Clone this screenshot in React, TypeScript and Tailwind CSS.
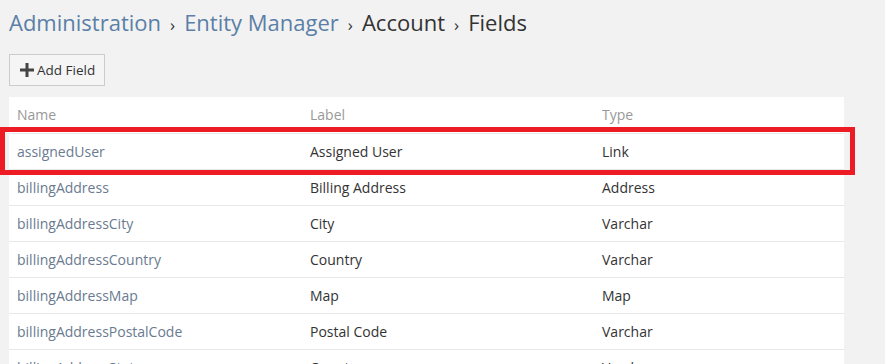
const fields = [
  { name: "assignedUser", label: "Assigned User", type: "Link" },
  { name: "billingAddress", label: "Billing Address", type: "Address" },
  { name: "billingAddressCity", label: "City", type: "Varchar" },
  { name: "billingAddressCountry", label: "Country", type: "Varchar" },
  { name: "billingAddressMap", label: "Map", type: "Map" },
  { name: "billingAddressPostalCode", label: "Postal Code", type: "Varchar" },
  { name: "billingAddressState", label: "County", type: "Varchar" },
]

function Sep() {
  return <span className="px-[9px] text-[17px] leading-none text-[#333]">›</span>
}

function Breadcrumbs() {
  return (
    <div className="h-[38px] pt-[6px]">
      <h3 className="flex h-[32px] items-baseline text-[22px] leading-[32px] text-[#333]">
        <a className="text-[#5b7fa6]">Administration</a>
        <Sep />
        <a className="text-[#5b7fa6]">Entity Manager</a>
        <Sep />
        <span>Account</span>
        <Sep />
        <span>Fields</span>
      </h3>
    </div>
  )
}

export default function App() {
  return (
    <div
      className="relative flex h-[364px] w-[890px] overflow-hidden bg-white"
      style={{ fontFamily: "'Open Sans', 'Liberation Sans', sans-serif" }}
    >
      <div className="flex w-[885px] flex-col bg-[#f2f2f2] pl-[9px] pr-[41px]">
        <Breadcrumbs />

        <div className="mt-[16px]">
          <button className="flex h-[32px] w-[96px] items-center gap-[3px] border border-[#ccc] bg-[#f5f5f5] pl-[10px] text-[13.5px] text-[#333]">
            <svg width="14" height="14" viewBox="0 0 14 14" className="shrink-0">
              <path d="M5.5 0h3v5.5H14v3H8.5V14h-3V8.5H0v-3h5.5z" fill="#444" />
            </svg>
            Add Field
          </button>
        </div>

        <table className="mt-[11px] w-[835px] table-fixed bg-white text-[14px]">
          <colgroup>
            <col className="w-[293px]" />
            <col className="w-[292px]" />
            <col />
          </colgroup>
          <thead>
            <tr className="h-[36px] text-left text-[#999]">
              <th className="px-[8px] font-normal">Name</th>
              <th className="px-[8px] font-normal">Label</th>
              <th className="px-[8px] font-normal">Type</th>
            </tr>
          </thead>
          <tbody>
            {fields.map((f) => (
              <tr key={f.name} className="h-[36px] border-t border-[#e8e8e8]">
                <td className="px-[8px] text-[#6a7a90]">{f.name}</td>
                <td className="px-[8px] text-[#333]">{f.label}</td>
                <td className="px-[8px] text-[#333]">{f.type}</td>
              </tr>
            ))}
          </tbody>
        </table>
      </div>

      <div className="absolute left-0 top-[127px] h-[48px] w-[855px] border-[5px] border-[#ed1c24]" />
    </div>
  )
}
